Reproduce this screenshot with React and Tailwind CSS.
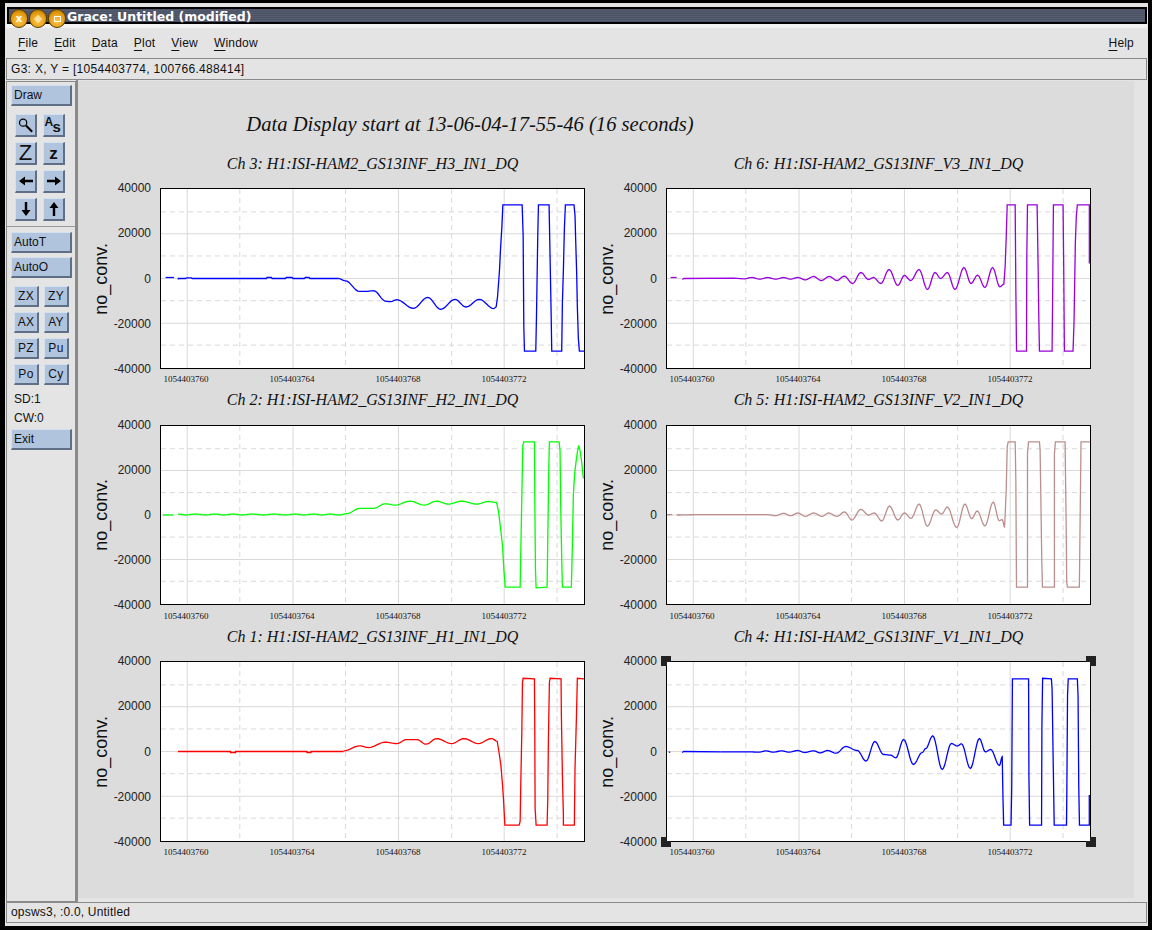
import React from "react";

const sans = "font-['Liberation_Sans',Arial,sans-serif]";
const serif = "font-['Liberation_Serif','Times_New_Roman',serif]";

// cosine interpolate between extrema so the wiggles look like the sampled signal
const wave = (pts) => {
  const out = [];
  for (let i = 0; i < pts.length - 1; i++) {
    const [x0, y0] = pts[i];
    const [x1, y1] = pts[i + 1];
    for (let s = 0; s < 8; s++) {
      const t = s / 8;
      out.push([x0 + (x1 - x0) * t, y0 + ((y1 - y0) * (1 - Math.cos(Math.PI * t))) / 2]);
    }
  }
  out.push(pts[pts.length - 1]);
  return out;
};

const toPoints = (pts) => pts.map((p) => p.join(",")).join(" ");

const charts = [
  {
    title: "Ch 3: H1:ISI-HAM2_GS13INF_H3_IN1_DQ",
    color: "#0000ff",
    ox: 211,
    oy: 115,
    head: [[[225, 382], [250, 382]], [[263, 388], [263, 385], [285, 385], [288, 383], [302, 383], [305, 385], [528, 385], [530, 382], [543, 382], [545, 385], [585, 385], [588, 382], [605, 382], [608, 385], [642, 385], [645, 382], [656, 382], [659, 385], [745, 385]]],
    curve: [[745, 385], [765, 392], [808, 424], [828, 424], [850, 422], [888, 454], [900, 455], [920, 449], [970, 475], [1013, 442], [1052, 478], [1095, 448], [1128, 471], [1168, 448], [1212, 476]],
    tail: [[1219, 470], [1223, 440], [1226, 400], [1229, 358], [1232, 295], [1236, 230], [1239, 163], [1297, 163], [1300, 255], [1302, 530], [1304, 604], [1338, 604], [1340, 505], [1344, 255], [1346, 163], [1378, 163], [1380, 270], [1384, 480], [1386, 604], [1416, 604], [1418, 460], [1421, 360], [1424, 235], [1427, 163], [1453, 163], [1456, 195], [1458, 270], [1461, 370], [1463, 470], [1466, 565], [1469, 604], [1483, 604]],
  },
  {
    title: "Ch 6: H1:ISI-HAM2_GS13INF_V3_IN1_DQ",
    color: "#9900dd",
    ox: 199,
    oy: 115,
    head: [[[210, 382], [228, 382]], [[245, 388], [250, 385], [400, 384], [430, 386]]],
    curve: [[430, 386], [455, 382], [478, 387], [502, 382], [526, 387], [550, 382], [570, 387], [592, 382], [615, 389], [640, 379], [663, 391], [687, 379], [710, 391], [732, 378], [757, 400], [782, 367], [805, 388], [820, 382], [842, 400], [867, 358], [893, 406], [913, 376], [932, 391], [957, 358], [982, 418], [1005, 367], [1022, 385], [1042, 367], [1065, 418], [1092, 352], [1113, 400], [1133, 375], [1155, 412], [1178, 352], [1200, 410], [1212, 402]],
    tail: [[1216, 345], [1219, 262], [1222, 163], [1246, 163], [1248, 418], [1250, 604], [1280, 604], [1281, 318], [1283, 163], [1312, 163], [1315, 350], [1317, 500], [1319, 604], [1357, 604], [1359, 395], [1361, 163], [1390, 163], [1392, 355], [1394, 604], [1420, 604], [1423, 515], [1427, 275], [1430, 195], [1433, 163], [1469, 163], [1469, 340]],
  },
  {
    title: "Ch 2: H1:ISI-HAM2_GS13INF_H2_IN1_DQ",
    color: "#00ff00",
    ox: 211,
    oy: 106,
    head: [[[217, 376], [248, 376]]],
    curve: [[262, 373], [285, 376], [315, 373], [345, 376], [372, 373], [400, 376], [428, 373], [455, 376], [485, 373], [520, 376], [550, 373], [585, 376], [615, 373], [640, 376], [670, 373], [695, 376], [720, 373], [745, 376], [770, 372], [808, 356], [850, 356], [885, 342], [915, 346], [960, 334], [1003, 346], [1040, 334], [1075, 343], [1115, 334], [1160, 343], [1195, 335], [1220, 338]],
    tail: [[1226, 365], [1232, 415], [1238, 470], [1242, 540], [1246, 595], [1291, 595], [1293, 485], [1296, 320], [1299, 165], [1302, 154], [1334, 154], [1335, 315], [1337, 540], [1339, 597], [1372, 595], [1374, 455], [1377, 240], [1379, 154], [1408, 154], [1411, 180], [1413, 350], [1416, 510], [1418, 595], [1445, 595], [1448, 470], [1451, 315], [1455, 250], [1459, 215], [1463, 185], [1467, 165], [1471, 180], [1476, 215], [1481, 265]],
  },
  {
    title: "Ch 5: H1:ISI-HAM2_GS13INF_V2_IN1_DQ",
    color: "#bc8f8f",
    ox: 199,
    oy: 106,
    head: [[[199, 375], [215, 375]]],
    curve: [[228, 376], [300, 375], [380, 375], [500, 375], [525, 378], [550, 371], [570, 378], [593, 370], [615, 380], [640, 370], [665, 380], [685, 370], [710, 380], [733, 367], [755, 391], [782, 359], [805, 376], [822, 370], [845, 394], [868, 349], [893, 391], [913, 370], [933, 386], [957, 343], [982, 410], [1007, 361], [1025, 373], [1042, 352], [1070, 414], [1095, 343], [1115, 387], [1132, 364], [1155, 409], [1180, 337], [1198, 393], [1207, 390], [1214, 412]],
    tail: [[1216, 375], [1219, 300], [1222, 170], [1225, 154], [1246, 154], [1248, 270], [1250, 595], [1283, 595], [1283, 190], [1286, 154], [1319, 154], [1321, 180], [1323, 310], [1326, 515], [1328, 595], [1364, 595], [1364, 190], [1367, 154], [1396, 154], [1399, 375], [1401, 580], [1403, 595], [1439, 595], [1440, 505], [1442, 330], [1444, 154], [1471, 154]],
  },
  {
    title: "Ch 1: H1:ISI-HAM2_GS13INF_H1_IN1_DQ",
    color: "#ff0000",
    ox: 211,
    oy: 109,
    head: [[[262, 379], [420, 379], [420, 382], [435, 382], [435, 379], [650, 379], [650, 382], [662, 382], [662, 379], [760, 379]]],
    curve: [[760, 377], [808, 362], [835, 367], [885, 351], [920, 355], [950, 343], [980, 343], [1008, 357], [1040, 340], [1085, 355], [1122, 340], [1165, 355], [1205, 340], [1222, 348]],
    tail: [[1228, 385], [1233, 420], [1238, 480], [1241, 525], [1245, 601], [1288, 601], [1291, 590], [1293, 470], [1296, 322], [1298, 170], [1300, 158], [1334, 160], [1335, 310], [1336, 550], [1339, 601], [1372, 601], [1374, 525], [1376, 340], [1379, 170], [1381, 158], [1414, 160], [1415, 270], [1418, 450], [1421, 570], [1421, 601], [1454, 601], [1456, 430], [1460, 285], [1463, 158], [1483, 160]],
  },
  {
    title: "Ch 4: H1:ISI-HAM2_GS13INF_V1_IN1_DQ",
    color: "#0000ff",
    ox: 188,
    oy: 109,
    sx: 1272 / 1205,
    selected: true,
    head: [[[193, 381], [197, 381]], [[231, 382], [236, 379], [340, 380]]],
    curve: [[340, 380], [420, 380], [450, 381], [470, 377], [490, 381], [515, 377], [535, 381], [560, 376], [580, 382], [605, 377], [625, 383], [645, 376], [670, 384], [697, 364], [730, 376], [755, 408], [780, 349], [805, 388], [825, 390], [840, 398], [862, 343], [890, 418], [915, 382], [925, 370], [945, 332], [972, 433], [998, 355], [1015, 362], [1027, 356], [1052, 430], [1078, 340], [1095, 380], [1110, 373], [1135, 421], [1143, 395]],
    tail: [[1145, 515], [1147, 601], [1168, 601], [1170, 490], [1172, 160], [1218, 160], [1219, 450], [1221, 601], [1255, 601], [1256, 300], [1258, 158], [1283, 160], [1285, 190], [1288, 400], [1291, 601], [1326, 601], [1327, 505], [1329, 210], [1331, 160], [1357, 160], [1359, 212], [1361, 485], [1363, 601], [1391, 601], [1391, 510]],
  },
];

const rows = [
  { gap: "mb-[14px]", box: "h-[181px]", ticks: "h-[195px]", foot: "h-[21px] leading-[21px]" },
  { gap: "mb-[15px]", box: "h-[180px]", ticks: "h-[194px]", foot: "h-[22px] leading-[22px]" },
  { gap: "mb-[14px]", box: "h-[181px]", ticks: "h-[195px]", foot: "h-[21px] leading-[21px]" },
];

const handles = [
  { pos: "-left-[6px] -top-[6px]", notch: "right-0 bottom-0" },
  { pos: "-right-[6px] -top-[6px]", notch: "left-0 bottom-0" },
  { pos: "-left-[6px] -bottom-[6px]", notch: "right-0 top-0" },
  { pos: "-right-[6px] -bottom-[6px]", notch: "left-0 top-0" },
];

function Plot({ chart, row }) {
  const major = [79, 397, 714, 1032];
  const minor = [237, 555, 874, 1191];
  const trace = chart.head;
  const main = [...wave(chart.curve), ...chart.tail];
  const move = `scale(${chart.sx || 1} 1) translate(${-chart.ox} ${-chart.oy})`;
  return (
    <div className="w-[506px]">
      <div className={`pl-[70px] w-[495px] h-[20px] ${row.gap} text-center text-[16px] leading-[20px] italic text-[#111] ${serif}`}>
        {chart.title}
      </div>
      <div className="flex items-start w-[495px]">
        <div className={`w-[21px] flex items-center justify-center ${row.box}`}>
          <span className={`[writing-mode:vertical-rl] rotate-180 text-[18px] leading-[22px] text-[#111] ${sans}`}>no_conv.</span>
        </div>
        <div className={`w-[40px] -my-[7px] flex flex-col justify-between items-end text-[12px] leading-[14px] text-[#222] ${row.ticks} ${sans}`}>
          <span>40000</span>
          <span>20000</span>
          <span>0</span>
          <span>-20000</span>
          <span>-40000</span>
        </div>
        <div className={`relative ml-[9px] w-[425px] bg-white border border-black ${row.box}`}>
          <svg viewBox="0 0 1272 540" preserveAspectRatio="none" className="block w-full h-full">
            {major.map((x) => (
              <line key={x} x1={x} x2={x} y1="0" y2="540" stroke="#d9d9d9" strokeWidth="1" vectorEffect="non-scaling-stroke" />
            ))}
            {minor.map((x) => (
              <line key={x} x1={x} x2={x} y1="0" y2="540" stroke="#d9d9d9" strokeWidth="1" strokeDasharray="5 4" vectorEffect="non-scaling-stroke" />
            ))}
            {[135, 270, 405].map((y) => (
              <line key={y} x1="0" x2="1272" y1={y} y2={y} stroke="#d9d9d9" strokeWidth="1" vectorEffect="non-scaling-stroke" />
            ))}
            {[69, 202, 337, 471].map((y) => (
              <line key={y} x1="0" x2="1272" y1={y} y2={y} stroke="#d9d9d9" strokeWidth="1" strokeDasharray="5 4" vectorEffect="non-scaling-stroke" />
            ))}
            <g transform={move}>
              {trace.map((pts, i) => (
                <polyline key={i} points={toPoints(pts)} fill="none" stroke={chart.color} strokeWidth="1.3" vectorEffect="non-scaling-stroke" />
              ))}
              <polyline points={toPoints(main)} fill="none" stroke={chart.color} strokeWidth="1.3" vectorEffect="non-scaling-stroke" />
            </g>
          </svg>
          {chart.selected &&
            handles.map((h) => (
              <div key={h.pos} className={`absolute w-[10px] h-[10px] bg-[#222] ${h.pos}`}>
                <div className={`absolute w-[4px] h-[4px] bg-white ${h.notch}`} />
              </div>
            ))}
        </div>
      </div>
      <div className={`ml-[43px] w-[424px] grid grid-cols-4 text-center text-[9px] text-[#111] ${row.foot} ${serif}`}>
        <span>1054403760</span>
        <span>1054403764</span>
        <span>1054403768</span>
        <span>1054403772</span>
      </div>
    </div>
  );
}

const bevel = "bg-[#b0c4de] border-t border-l border-t-[#d5e0ee] border-l-[#d5e0ee] border-b-2 border-r-2 border-b-[#5f6f85] border-r-[#5f6f85]";

function WideBtn({ children, className = "" }) {
  return (
    <button className={`block w-[61px] h-[21px] ml-[4px] pl-[2px] text-left text-[12px] leading-[18px] text-[#111] ${bevel} ${className}`}>
      {children}
    </button>
  );
}

function IconBtn({ children }) {
  return <button className={`w-[22px] h-[23px] flex items-center justify-center text-[#111] ${bevel}`}>{children}</button>;
}

function SmallBtn({ children }) {
  return <button className={`w-[25px] h-[21px] text-center text-[12px] leading-[18px] tracking-[0.3px] text-[#111] ${bevel}`}>{children}</button>;
}

const Arrow = ({ d }) => (
  <svg width="16" height="16" viewBox="0 0 16 16">
    <path d={d} fill="#000" />
  </svg>
);

function TitleKnob({ children }) {
  return (
    <div className="relative w-[18px] h-[19px] rounded-full border border-[#5c3a00] bg-[radial-gradient(circle_at_50%_65%,#ffc94a,#e29a10_60%,#9a6200)] flex items-center justify-center">
      {children}
    </div>
  );
}

function Menu({ first, rest }) {
  return (
    <span>
      <span className="underline decoration-1 underline-offset-[3px]">{first}</span>
      {rest}
    </span>
  );
}

export default function App() {
  return (
    <div className={`w-[1152px] h-[930px] bg-black pt-[3px] pl-[5px] pr-[4px] pb-[4px] overflow-hidden ${sans}`}>
      <div className="w-full h-full bg-[#e4e4e4] pt-[4px] px-[1px] flex flex-col">
        {/* title bar */}
        <div className="relative ml-[1px] h-[17px] pt-[3px] border-2 border-black bg-[repeating-linear-gradient(180deg,#4b5264_0px,#4b5264_1px,#565d70_1px,#565d70_2px)] flex items-center pl-[58px] text-white text-[12.5px] font-bold font-['DejaVu_Sans',sans-serif] leading-none">
          Grace: Untitled (modified)
          <div className="absolute left-[1px] top-0 flex gap-[1px]">
            <TitleKnob>
              <span className="text-white text-[10px] font-bold leading-none">x</span>
            </TitleKnob>
            <TitleKnob>
              <span className="w-[6px] h-[6px] bg-[#ffe9b8] opacity-80 rotate-45" />
            </TitleKnob>
            <TitleKnob>
              <span className="w-[7px] h-[6px] border border-white" />
            </TitleKnob>
          </div>
        </div>
        <div className="h-[4px] bg-[#f2f2f2]" />

        {/* menu */}
        <div className="h-[29px] flex items-center gap-[16px] pl-[12px] pr-[13px] text-[12px] tracking-[0.2px] text-[#111]">
          <Menu first="F" rest="ile" />
          <Menu first="E" rest="dit" />
          <Menu first="D" rest="ata" />
          <Menu first="P" rest="lot" />
          <Menu first="V" rest="iew" />
          <Menu first="W" rest="indow" />
          <span className="ml-auto">
            <Menu first="H" rest="elp" />
          </span>
        </div>

        {/* locator */}
        <div className="mt-[1px] h-[22px] border border-[#8a8a8a] pl-[4px] text-[12px] leading-[20px] tracking-[0.3px] text-[#111]">
          G3: X, Y = [1054403774, 100766.488414]
        </div>

        {/* main area */}
        <div className="h-[822px] flex">
          <div className="w-[70px] mt-[1px] border border-[#8a8a8a] pt-[3px]">
            <WideBtn>Draw</WideBtn>
            <div className="mt-[8px] ml-[8px] grid grid-cols-[22px_22px] gap-x-[6px] gap-y-[5px]">
              <IconBtn>
                <svg width="20" height="20" viewBox="0 0 20 20" fill="none" stroke="#000">
                  <circle cx="7.5" cy="7.5" r="3.8" strokeWidth="1.3" />
                  <path d="M10.5 10.5L17 17" strokeWidth="2.2" />
                </svg>
              </IconBtn>
              <IconBtn>
                <span className="relative block w-[18px] h-[18px] font-bold leading-none">
                  <span className="absolute left-0 top-0 text-[12px]">A</span>
                  <span className="absolute left-[8px] top-[3px] text-[15px]">s</span>
                </span>
              </IconBtn>
              <IconBtn>
                <span className="text-[22px] leading-none">Z</span>
              </IconBtn>
              <IconBtn>
                <span className="text-[17px] font-bold leading-none">z</span>
              </IconBtn>
              <IconBtn>
                <Arrow d="M1 8L7 3.5V6.8H15V9.2H7V12.5Z" />
              </IconBtn>
              <IconBtn>
                <Arrow d="M15 8L9 3.5V6.8H1V9.2H9V12.5Z" />
              </IconBtn>
              <IconBtn>
                <Arrow d="M8 15L3.5 9H6.8V1H9.2V9H12.5Z" />
              </IconBtn>
              <IconBtn>
                <Arrow d="M8 1L3.5 7H6.8V15H9.2V7H12.5Z" />
              </IconBtn>
            </div>
            <div className="mt-[5px] border-t border-[#9a9a9a]" />
            <WideBtn className="mt-[5px]">AutoT</WideBtn>
            <WideBtn className="mt-[4px]">AutoO</WideBtn>
            <div className="mt-[8px] ml-[7px] grid grid-cols-[25px_25px] gap-x-[5px] gap-y-[5px]">
              {["ZX", "ZY", "AX", "AY", "PZ", "Pu", "Po", "Cy"].map((label) => (
                <SmallBtn key={label}>{label}</SmallBtn>
              ))}
            </div>
            <div className="ml-[7px] mt-[5px] text-[12px] leading-[19px] text-[#111]">
              <div>SD:1</div>
              <div>CW:0</div>
            </div>
            <WideBtn className="mt-[1px]">Exit</WideBtn>
          </div>

          <div className="w-[2px] bg-[#8a8a8a]" />

          <div className="w-[1056px] h-[817px] mt-[1px] bg-[#dcdcdc] pl-[12px] pt-[32px]">
            <div className={`w-[760px] h-[22px] mb-[19px] text-center text-[20.6px] leading-[22px] italic text-[#111] ${serif}`}>
              Data Display start at 13-06-04-17-55-46 (16 seconds)
            </div>
            <div className="grid grid-cols-[506px_506px]">
              {charts.map((chart, i) => (
                <Plot key={chart.title} chart={chart} row={rows[Math.floor(i / 2)]} />
              ))}
            </div>
          </div>
        </div>

        {/* status */}
        <div className="h-[21px] border border-[#8a8a8a] pl-[4px] text-[12px] leading-[19px] tracking-[0.2px] text-[#111]">
          opsws3, :0.0, Untitled
        </div>
      </div>
    </div>
  );
}
